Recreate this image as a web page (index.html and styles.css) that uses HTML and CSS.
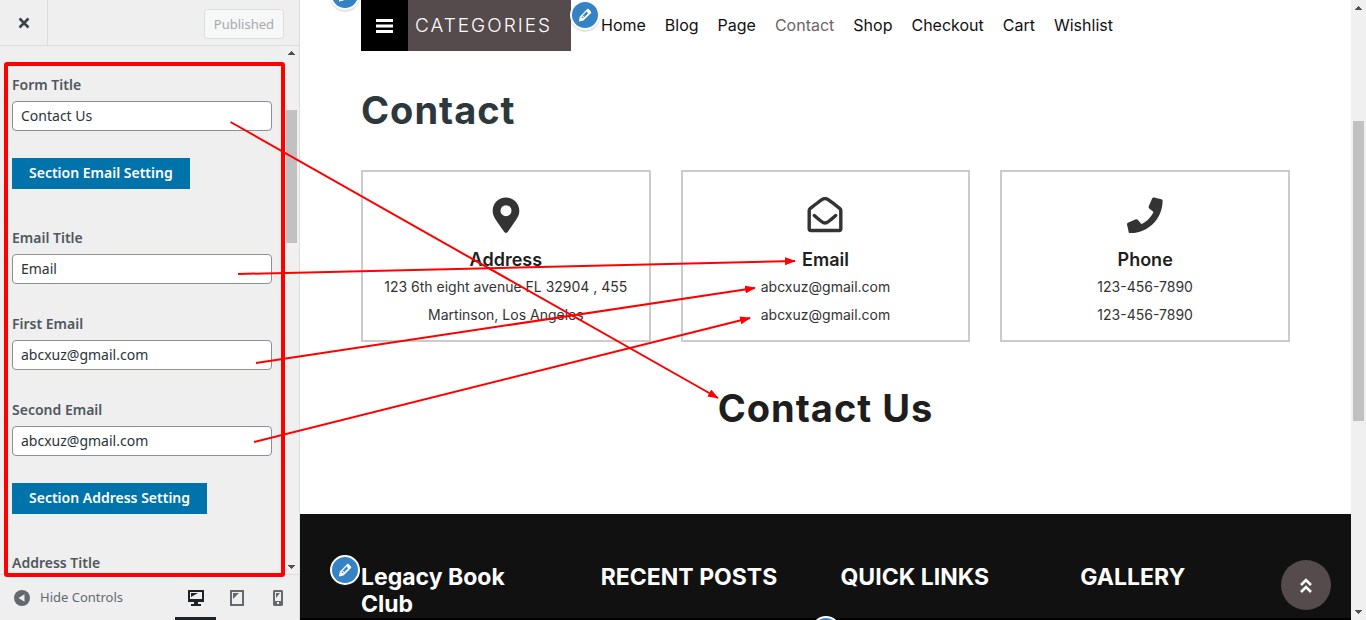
FILE: index.html
```html
<!DOCTYPE html>
<html lang="en">
<head>
<meta charset="utf-8">
<meta name="viewport" content="width=device-width, initial-scale=1">
<title>Customize: Contact</title>
<link rel="stylesheet" href="styles.css">
</head>
<body>
<svg class="defs" aria-hidden="true">
  <symbol id="pencil" viewBox="0 0 20 20"><path d="M13.9 3.4l2.7 2.7c.5.5.5 1.1.1 1.6L8.3 16.100l-5.100 1.100 1-5.200 8.200-8.600c.4-.4 1.100-.4 1.500 0zM5.900 12.100l1.900 1.900.8-.8-1.900-1.900zM7.400 10.500l1.900 1.900.8-.8-1.900-1.900zM8.300 9.600l1.900 1.900 3.300-3.400-1.900-1.900z" fill-rule="evenodd"/></symbol>
  <symbol id="arrow-up" viewBox="0 0 7 4"><path d="M3 0h1v1h1v1h1v1h1v1H0V3h1V2h1V1h1z"/></symbol>
</svg>

<div class="customizer">
  <aside class="sidebar">
    <header class="sidebar-header">
      <button class="close" type="button" aria-label="Close">
        <svg viewBox="0 0 12 12"><path d="M1.500 1.500l9 9M10.500 1.500l-9 9"/></svg>
      </button>
      <button class="published" type="button" disabled>Published</button>
    </header>
    <div class="panel">
      <form class="fields">
        <div class="field"><label for="form-title">Form Title</label><input id="form-title" type="text" value="Contact Us"></div>
        <button class="section-button" type="button">Section Email Setting</button>
        <div class="field"><label for="email-title">Email Title</label><input id="email-title" type="text" value="Email"></div>
        <div class="field"><label for="first-email">First Email</label><input id="first-email" type="text" value="abcxuz@gmail.com"></div>
        <div class="field"><label for="second-email">Second Email</label><input id="second-email" type="text" value="abcxuz@gmail.com"></div>
        <button class="section-button" type="button">Section Address Setting</button>
        <div class="field"><label for="address-title">Address Title</label><input id="address-title" type="text" value="Address"></div>
      </form>
      <div class="scrollbar panel-scrollbar">
        <svg class="arrow"><use href="#arrow-up"/></svg>
        <span class="thumb"></span>
        <svg class="arrow down"><use href="#arrow-up"/></svg>
      </div>
    </div>
    <footer class="sidebar-footer">
      <button class="hide-controls" type="button">
        <svg viewBox="0 0 16 16"><circle cx="8" cy="8" r="8"/><path d="M10.500 4.200v7.600L4.500 8z" fill="#eee"/></svg>
        <span>Hide Controls</span>
      </button>
      <div class="devices">
        <button class="device active" type="button" aria-label="Desktop">
          <svg width="16" height="16" viewBox="0 0 16 16"><path fill-rule="evenodd" d="M0 0h16v12h-6v2h3v2H3v-2h3v-2H0zM2 2v7h12V2z"/><path d="M3 3h7L3 7z"/></svg>
        </button>
        <button class="device" type="button" aria-label="Tablet">
          <svg width="14" height="16" viewBox="0 0 14 16"><path fill-rule="evenodd" d="M0 0h14v16H0zM2 2v12h10V2z"/><path d="M3 3h6L3 9z"/></svg>
        </button>
        <button class="device" type="button" aria-label="Mobile">
          <svg width="10" height="16" viewBox="0 0 10 16"><path fill-rule="evenodd" d="M1 0h8l1 1v14l-1 1H1l-1-1V1zM2 2v9h6V2zM4 12v2h2v-2z"/><path d="M3 3h4L3 8z"/></svg>
        </button>
      </div>
    </footer>
  </aside>

  <div class="preview">
    <div class="site">
      <header class="site-header wrap">
        <button class="edit edit-top" type="button" aria-label="Edit header"><svg><use href="#pencil"/></svg></button>
        <button class="categories" type="button">
          <span class="menu-icon"><svg viewBox="0 0 17 14"><path d="M0 0h17v3H0zM0 5.500h17v3H0zM0 11h17v3H0z"/></svg></span>
          <span class="categories-text">CATEGORIES</span>
        </button>
        <nav class="menu">
          <button class="edit edit-menu" type="button" aria-label="Edit menu"><svg><use href="#pencil"/></svg></button>
          <a href="#">Home</a><a href="#">Blog</a><a href="#">Page</a><a class="current" href="#">Contact</a><a href="#">Shop</a><a href="#">Checkout</a><a href="#">Cart</a><a href="#">Wishlist</a>
        </nav>
      </header>
      <main class="wrap">
        <h1>Contact</h1>
        <div class="cards">
          <section class="card">
            <svg viewBox="0 0 36 36"><path fill-rule="evenodd" d="M18 .5c7.500 0 13.300 5.800 13.300 13.200 0 5.300-2.300 8-11.600 21.200-.9 1.200-2.500 1.200-3.400 0C7 21.700 4.700 19 4.700 13.700 4.700 6.300 10.500.5 18 .5zm0 7.700a5.500 5.500 0 1 0 0 11 5.500 5.500 0 0 0 0-11z"/></svg>
            <h3>Address</h3><p>123 6th eight avenue FL 32904 , 455</p><p>Martinson, Los Angeles</p>
          </section>
          <section class="card">
            <svg class="outline" viewBox="0 0 36 36"><path d="M2.200 13.500c0-.8.3-1.400.9-1.900C6 9.300 10.500 5.700 14.500 2.900c1.800-1.300 2.800-1.300 3.500-1.300s1.700 0 3.500 1.300c4 2.800 8.500 6.400 11.400 8.700.6.5.9 1.100.9 1.900v18.300c0 1-.7 1.700-1.700 1.700H3.900c-1 0-1.700-.7-1.700-1.700z"/><path d="M7.300 18.500c2.200 2 4.500 4 7.200 6 1.500 1.200 2.600 1.500 3.500 1.500s2-.3 3.500-1.500c2.700-2 5-4 7.200-6"/></svg>
            <h3>Email</h3><p>abcxuz@gmail.com</p><p>abcxuz@gmail.com</p>
          </section>
          <section class="card">
            <svg viewBox="0 0 36 36"><path d="M34.300 2.200L27 .5c-.8-.2-1.600.2-1.900 1l-3.400 7.900c-.3.700-.1 1.500.5 2l4.300 3.500c-2.500 5.400-7 9.800-12.200 12.200l-3.500-4.300c-.5-.6-1.300-.8-2-.5L.9 25.700c-.7.300-1.100 1.100-.9 1.900l1.700 7.300c.2.800.8 1.300 1.600 1.300C21.400 36.200 35.600 21.600 35.600 3.800c0-.8-.5-1.500-1.300-1.600z"/></svg>
            <h3>Phone</h3><p>123-456-7890</p><p>123-456-7890</p>
          </section>
        </div>
        <h2>Contact Us</h2>
      </main>
      <footer class="site-footer">
        <div class="wrap footer-columns">
          <div class="column"><button class="edit edit-widget" type="button" aria-label="Edit widget"><svg><use href="#pencil"/></svg></button><h4>Legacy Book Club</h4></div>
          <div class="column"><h4>RECENT POSTS</h4></div>
          <div class="column"><h4>QUICK LINKS</h4></div>
          <div class="column"><h4>GALLERY</h4></div>
        </div>
        <button class="edit edit-bottom" type="button" aria-label="Edit copyright"><svg><use href="#pencil"/></svg></button>
      </footer>
      <button class="to-top" type="button" aria-label="Back to top"><svg viewBox="0 0 12 16"><path d="M1 7l5-5 5 5M1 14l5-5 5 5"/></svg></button>
    </div>
    <div class="scrollbar page-scrollbar">
      <svg class="arrow"><use href="#arrow-up"/></svg>
      <span class="thumb"></span>
      <svg class="arrow down"><use href="#arrow-up"/></svg>
    </div>
  </div>
</div>

<svg class="annotations" aria-hidden="true">
  <defs><marker id="head" viewBox="0 0 11 8" refX="10" refY="4" markerWidth="11" markerHeight="8" markerUnits="userSpaceOnUse" orient="auto"><path d="M0 0l11 4L0 8z" fill="#f00"/></marker></defs>
  <rect x="6" y="64" width="277" height="511" rx="1" stroke-width="4"/>
  <path d="M230.500 122L718 398" marker-end="url(#head)"/>
  <path d="M238 274L795 261" marker-end="url(#head)"/>
  <path d="M256 363L755 288" marker-end="url(#head)"/>
  <path d="M254 442L750 318" marker-end="url(#head)"/>
</svg>
</body>
</html>
```
FILE: styles.css
```css
* { box-sizing: border-box; }
body { margin: 0; background: #fff; }
h1, h2, h3, h4, p { margin: 0; }
button { margin: 0; padding: 0; border: 0; background: none; font: inherit; color: inherit; cursor: pointer; }
.defs { position: absolute; width: 0; height: 0; }

.customizer { position: relative; display: grid; grid-template-columns: 300px 1fr; height: 100vh; overflow: hidden; }

/* Sidebar */
.sidebar { display: flex; flex-direction: column; min-height: 0; background: #efefef; border-right: 1px solid #ddd; font-family: "Noto Sans", sans-serif; font-size: 13px; }
.sidebar-header { display: flex; align-items: stretch; justify-content: space-between; flex: none; height: 46px; border-bottom: 1px solid #ddd; }
.close { width: 48px; padding-top: 2px; border-right: 1px solid #ddd; }
.close svg { width: 12px; height: 12px; stroke: #3c434a; stroke-width: 2.6; }
.published { align-self: center; height: 30px; margin: 2px 15px 0 0; padding: 0 9px; border: 1px solid #dcdcde; border-radius: 3px; background: #f6f7f7; color: #a7aaad; }
.panel { display: flex; flex: 1; min-height: 0; overflow: hidden; }
.fields { flex: 1; display: flex; flex-direction: column; align-items: flex-start; padding: 29px 12px 0; }
.field { display: flex; flex-direction: column; gap: 6px; width: 100%; flex: none; }
.field label { font-size: 14px; line-height: 20px; font-weight: 600; color: #50575e; }
.field input { width: 100%; height: 30px; padding: 0 8px 2px; border: 1px solid #8c8f94; border-radius: 4px; background: #fff; font: 14px "Noto Sans", sans-serif; color: #2c3338; }
.field + .field { margin-top: 30px; }
.section-button { flex: none; height: 31px; margin: 27px 0 39px; padding: 0 17px 2px; background: #0073aa; color: #fff; font-size: 14px; font-weight: 600; }

.scrollbar { display: flex; flex-direction: column; align-items: center; flex: none; width: 15px; background: #f0f0f0; }
.scrollbar .arrow { width: 7px; height: 4px; flex: none; fill: #505050; }
.scrollbar .down { margin-top: auto; transform: rotate(180deg); }
.scrollbar .thumb { width: 11px; background: #c1c1c1; }
.panel-scrollbar { padding: 5px 0; }
.panel-scrollbar .thumb { height: 133px; margin-top: 55px; }
.page-scrollbar { padding: 6px 0; }
.page-scrollbar .thumb { height: 300px; margin-top: 111px; }

.sidebar-footer { display: flex; justify-content: space-between; flex: none; height: 46px; border-top: 1px solid #ddd; }
.hide-controls { display: flex; align-items: center; gap: 10px; padding-left: 14px; color: #646970; }
.hide-controls svg { width: 16px; height: 16px; fill: #646970; }
.hide-controls span { padding-bottom: 2px; }
.devices { display: flex; padding-right: 1px; }
.device { display: flex; align-items: center; justify-content: center; width: 41px; padding-top: 4px; border-bottom: 3px solid transparent; }
.device svg { fill: #646970; }
.device.active { border-color: #1d2327; }
.device.active svg { fill: #1d2327; }

/* Site preview */
.preview { display: flex; min-width: 0; min-height: 0; }
.site { position: relative; flex: 1; min-width: 0; display: flex; flex-direction: column; overflow: hidden; background: #fff; font-family: Inter, sans-serif; }
.wrap { padding-inline: 61px; }
.site-header { position: relative; display: flex; gap: 30px; height: 51px; }
.categories { display: flex; flex: none; width: 210px; background: #564b4c; color: #fff; }
.menu-icon { display: flex; align-items: center; justify-content: center; width: 47px; height: 51px; background: #000; }
.menu-icon svg { width: 17px; height: 14px; fill: #fff; }
.categories-text { padding-left: 7px; font-size: 19px; line-height: 51px; font-weight: 300; letter-spacing: 2px; }
.menu { position: relative; display: flex; align-items: center; gap: 19px; padding-bottom: 2px; font-size: 16px; white-space: nowrap; }
.menu a { color: #111; text-decoration: none; }
.menu .current { color: #6e6465; }

.edit { position: absolute; display: flex; align-items: center; justify-content: center; width: 30px; height: 30px; border: 2px solid #fff; border-radius: 50%; background: #3582c4; box-shadow: 0 2px 1px rgba(60, 67, 74, .15); }
.edit svg { width: 18px; height: 18px; fill: #fff; }
.edit-top { left: 30px; top: -20px; }
.edit-menu { left: -31px; top: 0; }
.edit-widget { left: -31px; top: -9px; }
.edit-bottom { left: 50%; bottom: -28px; transform: translateX(-50%); }

h1, h2 { font-size: 38px; line-height: 46px; font-weight: 700; letter-spacing: 1px; }
h1 { margin-top: 36px; color: #2d383c; }
h2 { margin: 43px 0 83px; text-align: center; color: #1e1e1e; }
.cards { display: grid; grid-template-columns: repeat(3, 1fr); gap: 30px; margin-top: 37px; }
.card { padding: 25px 10px 11px; border: 2px solid #cbcbcb; text-align: center; color: #333; }
.card svg { display: block; width: 36px; height: 36px; margin: 0 auto 13px; fill: #333; }
.card .outline { fill: none; stroke: #333; stroke-width: 3.4; stroke-linecap: round; stroke-linejoin: round; }
.card h3 { font-size: 18px; line-height: 27px; font-weight: 600; color: #1e1e1e; }
.card p { font-size: 14px; line-height: 28px; }

.site-footer { position: relative; flex: 1; padding-top: 50px; background: #111; border-bottom: 2px solid #000; color: #fff; }
.footer-columns { display: grid; grid-template-columns: repeat(4, 1fr); gap: 30px; }
.column { position: relative; }
.column h4 { padding-right: 24px; font-size: 23px; line-height: 27px; font-weight: 700; }
.to-top { position: absolute; right: 20px; bottom: 10px; width: 50px; height: 50px; padding-top: 6px; border-radius: 50%; background: #564b4c; }
.to-top svg { width: 12px; height: 16px; fill: none; stroke: #fff; stroke-width: 2.6; }

.annotations { position: absolute; left: 0; top: 0; width: 100%; height: 100vh; pointer-events: none; fill: none; stroke: #f00; stroke-width: 2; }
.annotations marker path { stroke: none; }
```
